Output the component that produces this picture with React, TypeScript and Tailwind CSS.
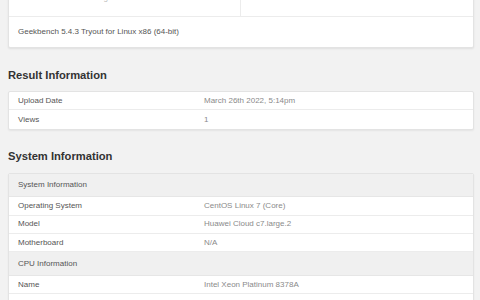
import React from 'react'

type Row = { label: string; value?: string; header?: boolean }

const resultRows: Row[] = [
  { label: 'Upload Date', value: 'March 26th 2022, 5:14pm' },
  { label: 'Views', value: '1' },
]

const systemRows: Row[] = [
  { label: 'System Information', header: true },
  { label: 'Operating System', value: 'CentOS Linux 7 (Core)' },
  { label: 'Model', value: 'Huawei Cloud c7.large.2' },
  { label: 'Motherboard', value: 'N/A' },
  { label: 'CPU Information', header: true },
  { label: 'Name', value: 'Intel Xeon Platinum 8378A' },
  { label: 'Topology', value: '1 Processor, 1 Core, 2 Threads' },
]

const InfoTable: React.FC<{ rows: Row[] }> = ({ rows }) => (
  <div className="bg-white border border-[#e3e3e3] rounded-[2px] shadow-[0_1px_2px_rgba(0,0,0,0.06)] overflow-hidden">
    {rows.map((row, i) =>
      row.header ? (
        <div
          key={i}
          className="h-[23.5px] flex items-center px-[9px] bg-[#f0f0f0] border-b border-[#e6e6e6] text-[8px] text-[#555]"
        >
          {row.label}
        </div>
      ) : (
        <div
          key={i}
          className="h-[18.4px] flex items-center px-[9px] border-b border-[#ececec] last:border-b-0 text-[8px]"
        >
          <span className="w-[186px] text-[#555]">{row.label}</span>
          <span className="text-[#8a8a8a]">{row.value}</span>
        </div>
      )
    )}
  </div>
)

const Section: React.FC<{ title: string; children: React.ReactNode }> = ({ title, children }) => (
  <div className="mt-[19px]">
    <h2 className="h-[16px] mb-[8px] flex items-center text-[11.2px] font-bold text-[#333]">{title}</h2>
    {children}
  </div>
)

export default function App() {
  return (
    <div
      className="w-[480px] h-[300px] overflow-hidden bg-[#f2f2f2]"
      style={{ fontFamily: '"Liberation Sans", Arial, sans-serif' }}
    >
      <div className="-mt-[48px] pl-[8px] w-[474px]">
        {/* score card */}
        <div className="bg-white border border-[#e3e3e3] rounded-[2px] shadow-[0_1px_2px_rgba(0,0,0,0.08)]">
          <div className="grid grid-cols-2 border-b border-[#ececec]">
            <div className="h-[63px] flex flex-col items-center justify-end pb-[13px] border-r border-[#ececec]">
              <span className="text-[16px] text-[#999] mb-[6px]">0</span>
              <span className="text-[8px] text-[#c0c0c0] leading-[10px]">Single-Core Score</span>
            </div>
            <div className="h-[63px] flex flex-col items-center justify-end pb-[13px]">
              <span className="text-[16px] text-[#999] mb-[6px]">0</span>
              <span className="text-[8px] text-[#c0c0c0] leading-[10px]">Multi-Core Score</span>
            </div>
          </div>
          <div className="h-[30px] flex items-center px-[9px] text-[8px] text-[#555]">
            Geekbench 5.4.3 Tryout for Linux x86 (64-bit)
          </div>
        </div>

        <Section title="Result Information">
          <InfoTable rows={resultRows} />
        </Section>

        <Section title="System Information">
          <InfoTable rows={systemRows} />
        </Section>
      </div>
    </div>
  )
}
